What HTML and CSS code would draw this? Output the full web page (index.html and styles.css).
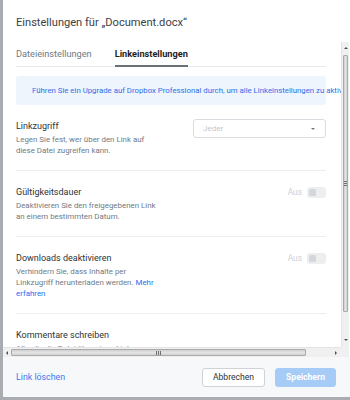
FILE: index.html
```html
<!DOCTYPE html>
<html lang="de">
<head>
<meta charset="utf-8">
<title>Einstellungen</title>
<link rel="stylesheet" href="styles.css">
</head>
<body>
<div class="dialog">
  <h1 class="title">Einstellungen für „Document.docx“</h1>
  <div class="scrollframe">
    <div class="viewport">
      <div class="content">
        <div class="tabs">
          <span class="tab">Dateieinstellungen</span>
          <span class="tab active">Linkeinstellungen</span>
        </div>
        <div class="banner"><span class="banner-text">Führen Sie ein Upgrade auf Dropbox Professional durch, um alle Linkeinstellungen zu aktivieren.</span></div>

        <div class="row">
          <div class="info">
            <div class="row-title">Linkzugriff</div>
            <div class="row-desc">Legen Sie fest, wer über den Link auf diese Datei zugreifen kann.</div>
          </div>
          <div class="select"><span class="select-value">Jeder</span><span class="caret"></span></div>
        </div>

        <div class="row">
          <div class="info">
            <div class="row-title">Gültigkeitsdauer</div>
            <div class="row-desc">Deaktivieren Sie den freigegebenen Link an einem bestimmten Datum.</div>
          </div>
          <div class="switch-wrap"><span class="switch-label">Aus</span><span class="switch"><span class="knob"></span></span></div>
        </div>

        <div class="row">
          <div class="info">
            <div class="row-title">Downloads deaktivieren</div>
            <div class="row-desc">Verhindern Sie, dass Inhalte per Linkzugriff herunterladen werden. <a class="link">Mehr erfahren</a></div>
          </div>
          <div class="switch-wrap"><span class="switch-label">Aus</span><span class="switch"><span class="knob"></span></span></div>
        </div>

        <div class="row last">
          <div class="info">
            <div class="row-title">Kommentare schreiben</div>
            <div class="row-desc">Alle, die die Datei über einen Link ansehen, können Kommentare schreiben.</div>
          </div>
        </div>
      </div>
    </div>
    <div class="vbar">
      <span class="arrow up"></span>
      <div class="vtrack"><div class="vthumb"><span class="grip-h"></span></div></div>
      <span class="arrow down"></span>
    </div>
    <div class="hbar">
      <span class="arrow left"></span>
      <div class="htrack"><div class="hthumb"><span class="grip-v"></span></div></div>
      <span class="arrow right"></span>
    </div>
    <div class="corner"></div>
  </div>
  <div class="footer">
    <a class="delete">Link löschen</a>
    <div class="actions">
      <button class="btn secondary">Abbrechen</button>
      <button class="btn primary">Speichern</button>
    </div>
  </div>
</div>
</body>
</html>
```

FILE: styles.css
```css
* { box-sizing: border-box; }
html, body { margin: 0; padding: 0; }
body {
  background: #a9adb2;
  width: 350px;
  height: 400px;
  overflow: hidden;
  font-family: Roboto, "Noto Sans", sans-serif;
}
.dialog {
  margin-left: 3px;
  width: 347px;
  height: 397px;
  background: #fff;
  display: flex;
  flex-direction: column;
}
.title {
  margin: 0;
  height: 42px;
  padding: 16px 0 0 13px;
  font-size: 11.1px;
  line-height: 14px;
  font-weight: 400;
  color: #3d4145;
}
.scrollframe {
  height: 315px;
  display: grid;
  grid-template-columns: 338px 8px;
  grid-template-rows: 305px 10px;
}
.viewport {
  overflow: hidden;
}
.content {
  width: 360px;
  padding: 0 0 0 13px;
}
.tabs {
  width: 310px;
  height: 25px;
  display: flex;
  gap: 23px;
  border-bottom: 1px solid #e8eaec;
}
.tab {
  font-size: 9.2px;
  line-height: 24px;
  height: 25px;
  color: #6f7a84;
}
.tab.active {
  color: #1e1e1e;
  font-weight: 700;
  border-bottom: 2px solid #6b7075;
}
.banner {
  width: 310px;
  height: 29px;
  margin-top: 9px;
  background: #eef5fd;
  border-radius: 3px;
  padding-left: 16px;
  white-space: nowrap;
}
.banner-text {
  font-size: 7.8px;
  line-height: 29px;
  color: #2f6ee8;
}
.row {
  width: 310px;
  display: flex;
  justify-content: space-between;
  align-items: flex-start;
  padding: 14px 0;
  border-bottom: 1px solid #eceef0;
}
.row.last { border-bottom: none; }
.info { width: 144px; }
.row-title {
  font-size: 9px;
  line-height: 14px;
  color: #2e3236;
}
.row-desc {
  margin-top: 2px;
  font-size: 7.9px;
  line-height: 10.6px;
  color: #6f7a84;
}
.link { color: #2a6ef0; }
.select {
  width: 133px;
  height: 19px;
  border: 1px solid #d9dde1;
  border-radius: 3px;
  display: flex;
  align-items: center;
  justify-content: space-between;
  padding: 0 10px 0 9px;
}
.select-value {
  font-size: 8px;
  color: #c2c7cc;
}
.caret {
  width: 0;
  height: 0;
  border-left: 2.5px solid transparent;
  border-right: 2.5px solid transparent;
  border-top: 2.5px solid #6f7a84;
}
.switch-wrap {
  height: 14px;
  display: flex;
  align-items: center;
  gap: 5px;
}
.switch-label {
  font-size: 8.4px;
  color: #cdd1d5;
}
.switch {
  width: 19px;
  height: 11px;
  border-radius: 3px;
  background: #eceef0;
  display: flex;
  align-items: center;
  padding-left: 2px;
}
.knob {
  width: 7px;
  height: 7px;
  border-radius: 1.5px;
  background: #d3d7db;
}
/* scrollbars */
.vbar {
  background: #f0f0f0;
  display: flex;
  flex-direction: column;
  align-items: center;
  border-left: 1px solid #e4e4e4;
}
.vtrack {
  flex: 1;
  width: 100%;
  padding: 0 1px;
}
.vthumb {
  height: 257px;
  margin-top: 1px;
  background: linear-gradient(to right, #cfcfcf, #e2e2e2 50%, #d2d2d2);
  border: 1px solid #a9a9a9;
  border-radius: 1px;
  display: flex;
  align-items: center;
  justify-content: center;
}
.grip-h {
  width: 4px;
  height: 5px;
  background: repeating-linear-gradient(to bottom, #707070 0 1px, transparent 1px 2px);
}
.hbar {
  background: #f0f0f0;
  display: flex;
  align-items: center;
  border-top: 1px solid #e4e4e4;
}
.htrack {
  flex: 1;
  height: 100%;
  padding: 1px 0;
}
.hthumb {
  width: 295px;
  height: 100%;
  background: linear-gradient(to bottom, #d0d0d0, #e3e3e3 50%, #d2d2d2);
  border: 1px solid #a9a9a9;
  border-radius: 1px;
  display: flex;
  align-items: center;
  justify-content: center;
}
.grip-v {
  width: 5px;
  height: 4px;
  background: repeating-linear-gradient(to right, #707070 0 1px, transparent 1px 2px);
}
.corner { background: #f0f0f0; }
.arrow {
  flex: none;
  width: 0;
  height: 0;
}
.arrow.up {
  margin: 5px 0 5px;
  border-left: 2px solid transparent;
  border-right: 2px solid transparent;
  border-bottom: 2px solid #505050;
}
.arrow.down {
  margin: 5px 0 6px;
  border-left: 2px solid transparent;
  border-right: 2px solid transparent;
  border-top: 2px solid #505050;
}
.arrow.left {
  margin: 0 3px 0 3px;
  border-top: 2px solid transparent;
  border-bottom: 2px solid transparent;
  border-right: 2px solid #505050;
}
.arrow.right {
  margin: 0 4px 0 24px;
  border-top: 2px solid transparent;
  border-bottom: 2px solid transparent;
  border-left: 2px solid #505050;
}
/* footer */
.footer {
  flex: 1;
  background: #f7f8f9;
  display: flex;
  align-items: center;
  justify-content: space-between;
  padding: 0 14px 0 13px;
}
.delete {
  font-size: 8.8px;
  color: #3a7af0;
}
.actions {
  display: flex;
  gap: 10px;
}
.btn {
  height: 19px;
  border-radius: 3px;
  font-family: Roboto, "Noto Sans", sans-serif;
  font-size: 8.6px;
  padding: 0;
}
.btn.secondary {
  width: 63px;
  background: #fff;
  border: 1px solid #cfd3d7;
  color: #2e3236;
}
.btn.primary {
  width: 61px;
  background: #a6cbf6;
  border: 1px solid #a6cbf6;
  color: #fff;
  font-weight: 700;
}
```
